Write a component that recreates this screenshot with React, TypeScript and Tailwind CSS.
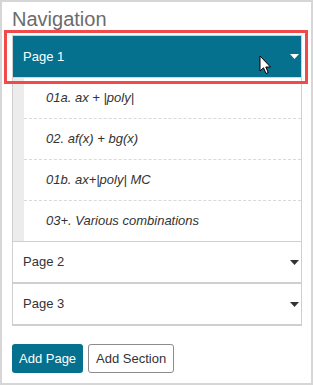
import React from "react";

const Caret = ({ color }: { color: string }) => (
  <svg width="9" height="5" viewBox="0 0 9 5" className="block">
    <path d="M0 0 L9 0 L4.5 5 Z" fill={color} />
  </svg>
);

const items = [
  "01a. ax + |poly|",
  "02. af(x) + bg(x)",
  "01b. ax+|poly| MC",
  "03+. Various combinations",
];

export default function App() {
  return (
    <div className="relative w-[313px] h-[385px] border-2 border-[#d6d6d6] bg-white font-['Liberation_Sans',Arial,sans-serif] overflow-hidden">
      <div className="pl-[10px] pr-[9px] pt-[6px]">
        <h2 className="text-[20px] leading-[22px] text-[#6b6b6b] font-normal">Navigation</h2>
        <div className="mt-[5px]">
          <div className="border border-[#cfcfcf]">
            <div className="h-[41px] bg-[#05718e] flex items-center justify-between pl-[10px] pr-[2px] text-[13px] text-white">
              <span>Page 1</span>
              <Caret color="#ffffff" />
            </div>
            <div className="flex border-t border-[#d6d6d6]">
              <div className="w-[11px] bg-[#ececec]" />
              <div className="flex-1">
                {items.map((t, i) => (
                  <div
                    key={t}
                    className={
                      i < items.length - 1
                        ? "h-[41px] flex items-center pl-[22px] border-b border-dashed border-[#d9d9d9] text-[13px] italic text-[#333]"
                        : "h-[40px] flex items-center pl-[22px] text-[13px] italic text-[#333]"
                    }
                  >
                    {t}
                  </div>
                ))}
              </div>
            </div>
          </div>
          {["Page 2", "Page 3"].map((p) => (
            <div key={p} className="border border-t-0 border-[#cfcfcf] border-b-2">
              <div className="h-[40px] flex items-center justify-between pl-[10px] pr-[2px] text-[13px] text-[#333]">
                <span>{p}</span>
                <Caret color="#333333" />
              </div>
            </div>
          ))}
        </div>
        <div className="mt-[18px] flex gap-[5px]">
          <button className="h-[29px] px-[7px] rounded-[3px] bg-[#05718e] text-white text-[13px] leading-none">Add Page</button>
          <button className="h-[29px] px-[7px] rounded-[3px] bg-white border border-[#8c8c8c] text-[#333] text-[13px] leading-none">Add Section</button>
        </div>
      </div>
      <div className="absolute left-[2px] top-[28px] w-[304px] h-[54px] border-[3px] border-[#f04a4a] pointer-events-none" />
      <svg className="absolute left-[257px] top-[53px]" width="13" height="20" viewBox="0 0 13 20">
        <path d="M1 1 L1 16 L4.5 12.8 L7 18.5 L9.2 17.5 L6.8 12 L11.5 12 Z" fill="#ffffff" stroke="#000000" strokeWidth="1" strokeLinejoin="miter" />
      </svg>
    </div>
  );
}
